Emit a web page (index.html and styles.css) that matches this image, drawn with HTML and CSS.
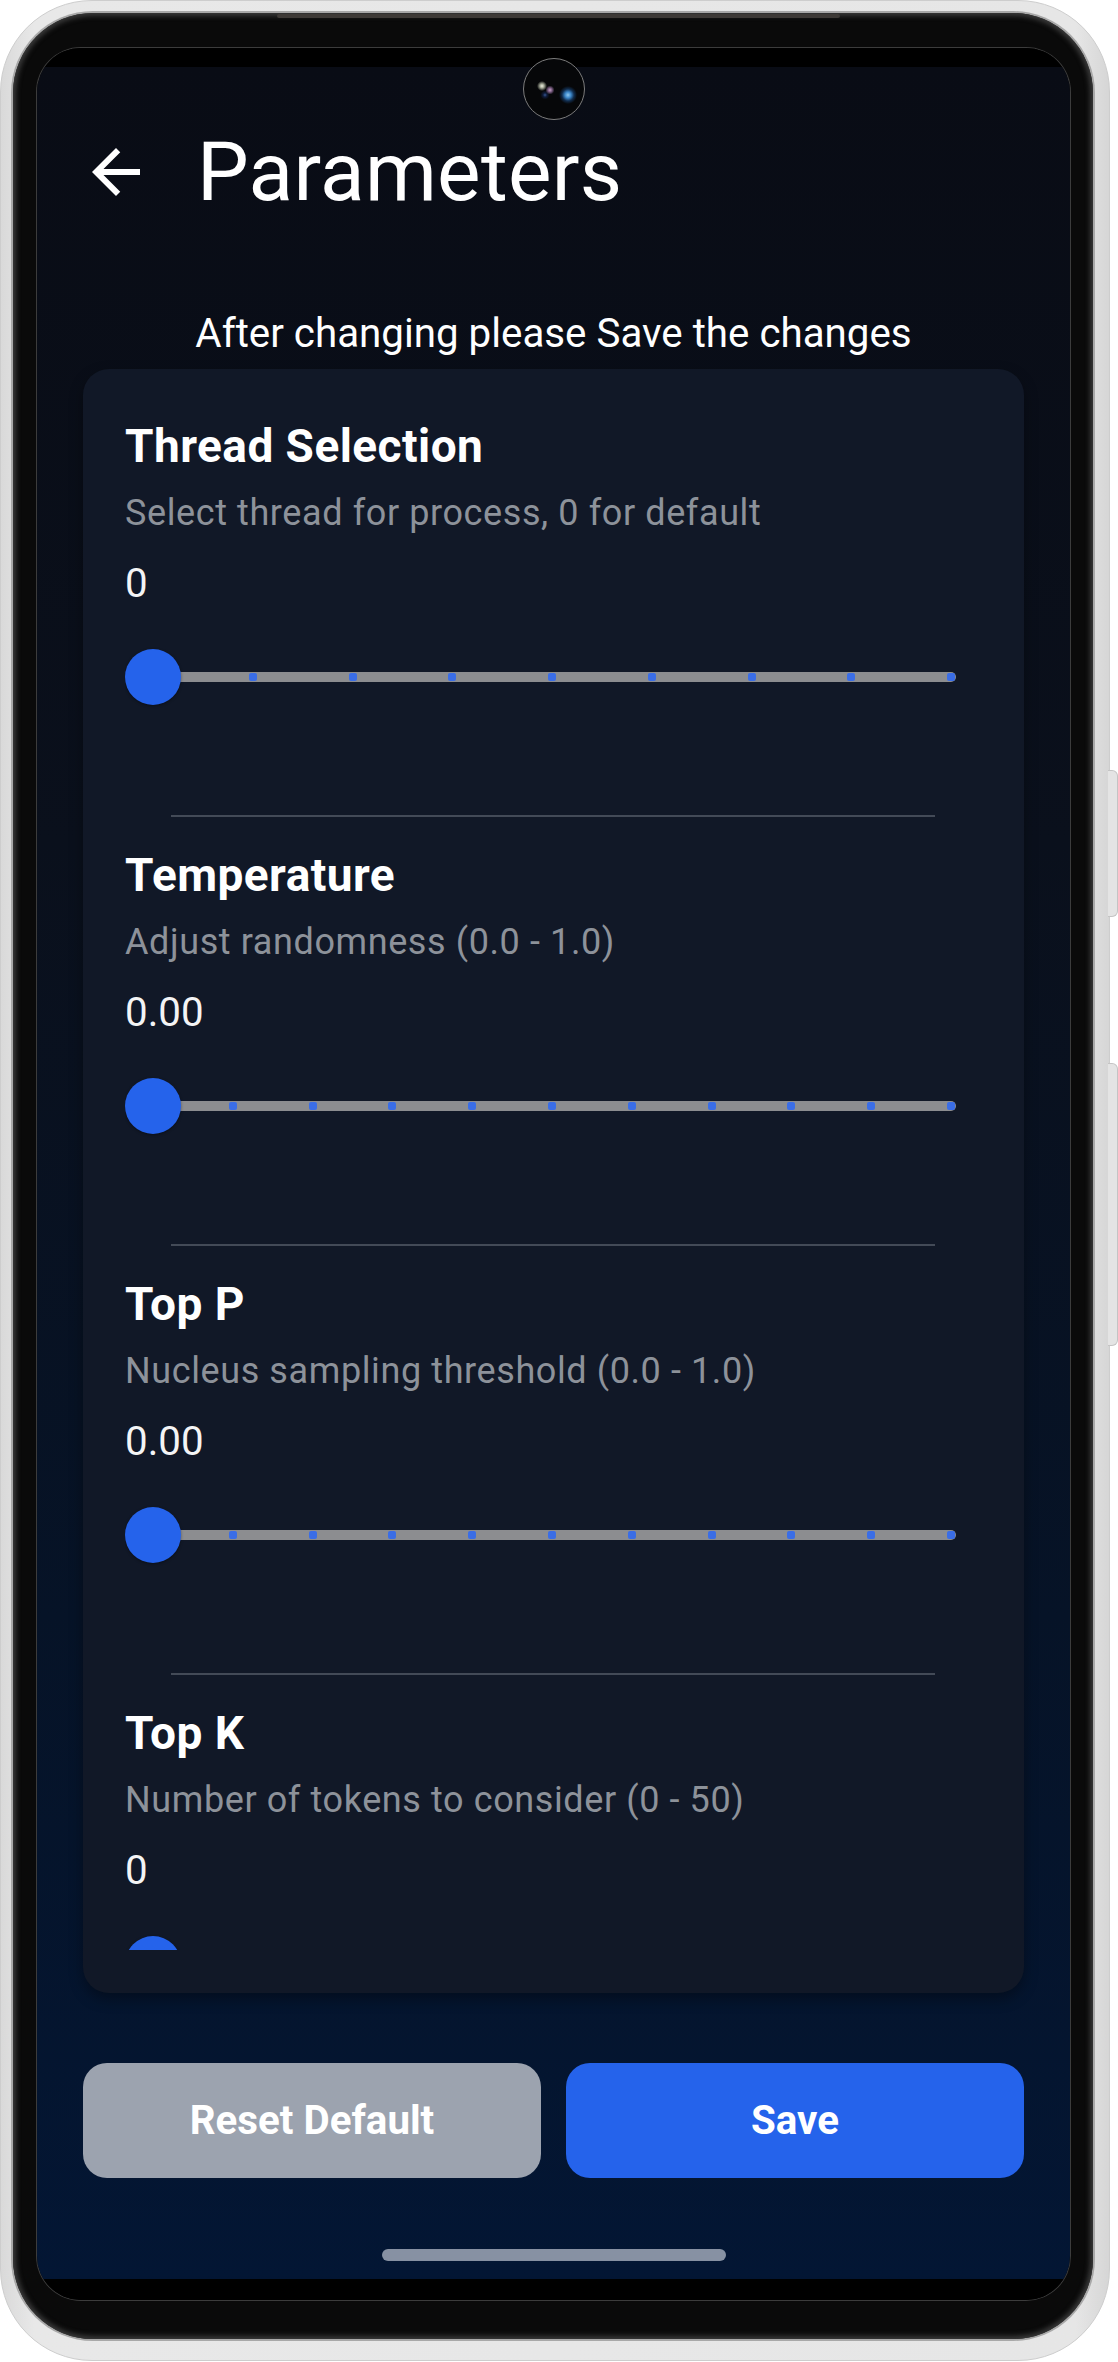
FILE: index.html
```html
<!DOCTYPE html>
<html lang="en">
<head>
<meta charset="utf-8">
<title>Parameters</title>
<link rel="stylesheet" href="styles.css">
</head>
<body>
<div class="phone">
  <div class="side-btn side-btn-top"></div>
  <div class="side-btn side-btn-bottom"></div>
  <div class="bezel">
    <div class="speaker"></div>
    <div class="screen">
      <div class="camera"></div>
      <div class="statusbar"></div>
      <div class="app">
        <header class="header">
          <svg class="back" viewBox="0 0 24 24" width="72" height="72" aria-hidden="true">
            <path d="M20 11H7.83l5.59-5.59L12 4l-8 8 8 8 1.41-1.41L7.83 13H20v-2z" fill="#ffffff"/>
          </svg>
          <h1 class="title">Parameters</h1>
        </header>
        <p class="hint">After changing please Save the changes</p>
        <section class="card">
          <div class="card-scroll">
            <div class="param">
              <h2 class="param-title">Thread Selection</h2>
              <p class="param-desc">Select thread for process, 0 for default</p>
              <p class="param-value">0</p>
              <div class="slider">
                <div class="track">
                  <span class="tick"></span><span class="tick"></span><span class="tick"></span>
                  <span class="tick"></span><span class="tick"></span><span class="tick"></span>
                  <span class="tick"></span><span class="tick"></span><span class="tick"></span>
                </div>
                <div class="thumb"></div>
              </div>
              <div class="divider"></div>
            </div>
            <div class="param">
              <h2 class="param-title">Temperature</h2>
              <p class="param-desc">Adjust randomness (0.0 - 1.0)</p>
              <p class="param-value">0.00</p>
              <div class="slider">
                <div class="track">
                  <span class="tick"></span><span class="tick"></span><span class="tick"></span>
                  <span class="tick"></span><span class="tick"></span><span class="tick"></span>
                  <span class="tick"></span><span class="tick"></span><span class="tick"></span>
                  <span class="tick"></span><span class="tick"></span>
                </div>
                <div class="thumb"></div>
              </div>
              <div class="divider"></div>
            </div>
            <div class="param">
              <h2 class="param-title">Top P</h2>
              <p class="param-desc">Nucleus sampling threshold (0.0 - 1.0)</p>
              <p class="param-value">0.00</p>
              <div class="slider">
                <div class="track">
                  <span class="tick"></span><span class="tick"></span><span class="tick"></span>
                  <span class="tick"></span><span class="tick"></span><span class="tick"></span>
                  <span class="tick"></span><span class="tick"></span><span class="tick"></span>
                  <span class="tick"></span><span class="tick"></span>
                </div>
                <div class="thumb"></div>
              </div>
              <div class="divider"></div>
            </div>
            <div class="param">
              <h2 class="param-title">Top K</h2>
              <p class="param-desc">Number of tokens to consider (0 - 50)</p>
              <p class="param-value">0</p>
              <div class="slider">
                <div class="track">
                  <span class="tick"></span><span class="tick"></span><span class="tick"></span>
                  <span class="tick"></span><span class="tick"></span><span class="tick"></span>
                  <span class="tick"></span><span class="tick"></span><span class="tick"></span>
                  <span class="tick"></span><span class="tick"></span>
                </div>
                <div class="thumb"></div>
              </div>
              <div class="divider"></div>
            </div>
          </div>
        </section>
        <div class="actions">
          <button class="btn btn-reset" type="button">Reset Default</button>
          <button class="btn btn-save" type="button">Save</button>
        </div>
        <div class="home-indicator"></div>
      </div>
      <div class="navbar"></div>
    </div>
  </div>
</div>
</body>
</html>
```
FILE: styles.css
```css
* {
  box-sizing: border-box;
}

html, body {
  margin: 0;
  padding: 0;
  background: #ffffff;
}

body {
  width: 1118px;
  height: 2362px;
  overflow: hidden;
  font-family: Roboto, "Noto Sans", "Liberation Sans", sans-serif;
}

/* ---------- device frame ---------- */
.phone {
  position: relative;
  width: 1110px;
  height: 2361px;
  padding: 12px 16px 21px 12px;
  border-radius: 92px;
  background: linear-gradient(90deg, #d9d9d9 0%, #e8e8e8 3%, #e6e6e6 97%, #d6d6d6 100%);
  border: 1px solid #cdcdcd;
  display: flex;
}

.side-btn {
  position: absolute;
  left: 1107px;
  width: 10px;
  background: #e4e4e4;
  border: 1px solid #c4c4c4;
  border-left: none;
  border-radius: 0 6px 6px 0;
}

.side-btn-top {
  top: 769px;
  height: 147px;
}

.side-btn-bottom {
  top: 1062px;
  height: 283px;
}

.bezel {
  position: relative;
  flex: 1;
  padding: 35px 23px 39px 24px;
  border-radius: 80px;
  background: #0a0a0a;
  box-shadow: 0 0 0 2px #a8a8a8, inset 0 0 5px 3px #3a3a3a;
  display: flex;
}

.speaker {
  position: absolute;
  left: 264px;
  top: 1px;
  width: 563px;
  height: 4px;
  border-radius: 2px;
  background: #3e3a37;
}

.screen {
  position: relative;
  flex: 1;
  border-radius: 44px;
  overflow: hidden;
  background: #000000;
  box-shadow: 0 0 0 1px #3c3c3c;
  display: flex;
  flex-direction: column;
}

.camera {
  position: absolute;
  left: 486px;
  top: 10px;
  width: 62px;
  height: 62px;
  border-radius: 50%;
  border: 1px solid #7c7c7c;
  background:
    radial-gradient(circle at 44px 36px, #8fcaf2 0, #3b86c8 3px, rgba(30, 90, 160, 0.45) 6px, rgba(0, 0, 0, 0) 9px),
    radial-gradient(circle at 18px 27px, #eef0e2 0, #a5aa98 2px, rgba(0, 0, 0, 0) 5px),
    radial-gradient(circle at 26px 31px, #c6a4c4 0, #7d5f86 2px, rgba(0, 0, 0, 0) 4.5px),
    radial-gradient(circle at 21px 36px, #34558f 0, rgba(20, 40, 90, 0.6) 2px, rgba(0, 0, 0, 0) 4.5px),
    #060709;
  z-index: 2;
}

.statusbar {
  height: 19px;
  flex: none;
  background: #000000;
}

.navbar {
  height: 21px;
  flex: none;
  background: #000000;
}

/* ---------- app ---------- */
.app {
  flex: 1;
  display: flex;
  flex-direction: column;
  background: linear-gradient(180deg, #090c15 0%, #0a101c 35%, #061327 70%, #031634 100%);
  color: #ffffff;
}

.header {
  display: flex;
  align-items: center;
  padding: 58px 0 0 43px;
  height: 152px;
}

.back {
  flex: none;
  display: block;
}

.title {
  margin: 0 0 0 45px;
  font-size: 82px;
  line-height: 94px;
  font-weight: 400;
  color: #ffffff;
  letter-spacing: 0.3px;
}

.hint {
  margin: 91px 0 0;
  font-size: 40.3px;
  line-height: 47px;
  text-align: center;
  color: #ffffff;
}

.card {
  margin: 12px 46px 0;
  height: 1624px;
  padding: 51px 45px 43px 42px;
  border-radius: 26px;
  background: #111827;
  box-shadow: 0 6px 14px rgba(0, 0, 0, 0.35);
  display: flex;
  flex-direction: column;
}

.card-scroll {
  flex: 1;
  overflow: hidden;
}

.param {
  padding-bottom: 32px;
}

.param-title {
  margin: 0;
  font-size: 46px;
  line-height: 53px;
  font-weight: 700;
  letter-spacing: 0.45px;
  color: #ffffff;
}

.param-desc {
  margin: 20px 0 0;
  font-size: 36px;
  line-height: 41px;
  letter-spacing: 0.6px;
  color: #8d929a;
}

.param-value {
  margin: 26px 0 0;
  font-size: 40.3px;
  line-height: 47px;
  color: #f4f4f5;
}

.slider {
  position: relative;
  margin-top: 42px;
  height: 56px;
  padding-top: 23px;
}

.track {
  margin: 0 23px;
  height: 10px;
  padding: 0 1px;
  border-radius: 5px;
  background: #8c8d90;
  display: flex;
  align-items: center;
  justify-content: space-between;
}

.tick {
  width: 8px;
  height: 8px;
  border-radius: 2px;
  background: #3a6de6;
}

.thumb {
  position: absolute;
  left: 0;
  top: 0;
  width: 56px;
  height: 56px;
  border-radius: 50%;
  background: #2563eb;
  box-shadow: 0 1px 3px rgba(0, 0, 0, 0.4);
}

.divider {
  margin: 110px 44px 0 46px;
  height: 2px;
  background: #434a57;
}

/* ---------- actions ---------- */
.actions {
  margin: 70px 46px 0;
  height: 115px;
  display: grid;
  grid-template-columns: 1fr 1fr;
  gap: 25px;
}

.btn {
  border: none;
  border-radius: 24px;
  font-family: Roboto, "Noto Sans", "Liberation Sans", sans-serif;
  font-size: 40.3px;
  font-weight: 700;
  color: #ffffff;
  padding: 0;
}

.btn-reset {
  background: #9ca3af;
}

.btn-save {
  background: #2563eb;
}

.home-indicator {
  margin: 71px auto 0;
  width: 344px;
  height: 12px;
  border-radius: 6px;
  background: #8791a3;
}
```
